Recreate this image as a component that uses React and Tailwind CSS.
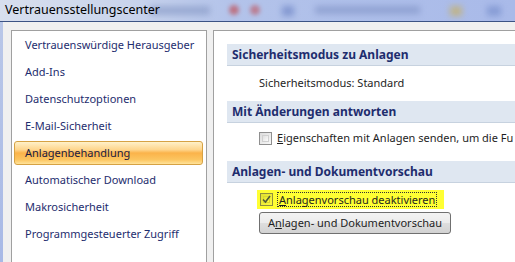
import React from "react";

const font = { fontFamily: '"Noto Sans", "Open Sans", sans-serif' };

function Item({ label, selected }) {
  return (
    <div className="h-[27px] px-[2px] pt-[1px]">
      <div
        className={
          "h-[24px] flex items-center pl-[10px] rounded-[3px] text-[11px] whitespace-nowrap " +
          (selected
            ? "border border-[#d6a244] bg-[linear-gradient(to_bottom,#fff1c9_0%,#fed58c_35%,#fbb34a_50%,#fcc560_80%,#ffe39a_100%)] text-[#1a1a40]"
            : "border border-transparent text-[#1e2d6e]")
        }
      >
        {label}
      </div>
    </div>
  );
}

function Header({ children }) {
  return (
    <div className="ml-[13px] h-[22px] bg-[#dfe7f1] border-b border-[#c7d2df] flex items-center pl-[5px] text-[12px] font-bold text-[#1e2d6e] whitespace-nowrap">
      {children}
    </div>
  );
}

function Checkbox({ checked }) {
  return (
    <div
      className={
        "w-[13px] h-[13px] border p-[2px] shrink-0 " +
        (checked
          ? "border-[#8f8f40] bg-[linear-gradient(135deg,#e0e030,#fbfb40)]"
          : "border-[#8f8f8f] bg-[linear-gradient(135deg,#dcdcdc,#f8f8f8)]")
      }
    >
      <div
        className={
          "w-full h-full border flex items-center justify-center " +
          (checked
            ? "border-[#d8d830] bg-[linear-gradient(135deg,#e4e430,#ffff40)]"
            : "border-[#d0d0d0] bg-[linear-gradient(135deg,#e0e0e0,#fbfbfb)]")
        }
      >
        {checked && (
          <svg width="9" height="9" viewBox="0 0 9 9" className="overflow-visible">
            <path d="M1 4.5 L3.5 7 L8 1" fill="none" stroke="#4f5a3a" strokeWidth="1.6" />
          </svg>
        )}
      </div>
    </div>
  );
}

export default function App() {
  const items = [
    "Vertrauenswürdige Herausgeber",
    "Add-Ins",
    "Datenschutzoptionen",
    "E-Mail-Sicherheit",
    "Anlagenbehandlung",
    "Automatischer Download",
    "Makrosicherheit",
    "Programmgesteuerter Zugriff",
  ];
  return (
    <div className="w-[515px] h-[262px] overflow-hidden bg-[#f0f0f0] flex flex-col" style={font}>
      {/* title bar */}
      <div className="relative h-[21px] shrink-0 overflow-hidden bg-[linear-gradient(to_right,#d8dfee_0%,#c9d4ec_25%,#b3c3ea_45%,#a9bae9_100%)]">
        <div className="absolute left-[150px] top-[6px] w-[60px] h-[9px] bg-[#8a9cc8] blur-[3px] opacity-70" />
        <div className="absolute left-[229px] top-[5px] w-[10px] h-[10px] rounded-full bg-[#c0525a] blur-[2px] opacity-70" />
        <div className="absolute left-[250px] top-[5px] w-[10px] h-[10px] rounded-full bg-[#c0525a] blur-[2px] opacity-60" />
        <div className="absolute left-[282px] top-[6px] w-[12px] h-[10px] bg-[#6f86c6] blur-[3px] opacity-70" />
        <div className="absolute left-[315px] top-[6px] w-[105px] h-[8px] bg-[#7d90c4] blur-[3px] opacity-60" />
        <div className="absolute left-[450px] top-[6px] w-[12px] h-[10px] bg-[#c8b060] blur-[3px] opacity-70" />
        <div className="absolute left-[487px] top-[6px] w-[14px] h-[10px] bg-[#7088c8] blur-[3px] opacity-60" />
        <div className="absolute left-[5px] top-0 h-[21px] flex items-center text-[12.5px] text-black whitespace-nowrap">
          Vertrauensstellungscenter
        </div>
      </div>
      <div className="h-px shrink-0 bg-[#3c5384]" />
      <div className="flex flex-1 min-h-0">
        <div className="w-[3px] shrink-0 bg-[linear-gradient(to_bottom,#b9c7e8,#a8b9e6)]" />
        <div className="flex flex-1 min-w-0 pt-[8px] pl-[8px] gap-[6px]">
          {/* left nav */}
          <div className="w-[196px] shrink-0 h-[300px] bg-white border border-[#a0a0a0] pt-[1px] pr-[1px]">
            {items.map((it) => (
              <Item key={it} label={it} selected={it === "Anlagenbehandlung"} />
            ))}
          </div>
          {/* right content */}
          <div className="w-[400px] shrink-0 h-[300px] overflow-hidden bg-white border border-[#a0a0a0] pt-[13px] text-[11px]">
            <Header>Sicherheitsmodus zu Anlagen</Header>
            <div className="h-[35px] flex items-center pl-[45px] text-[#1e1e1e] whitespace-nowrap">
              Sicherheitsmodus: Standard
            </div>
            <Header>Mit Änderungen antworten</Header>
            <div className="h-[38px] pb-[8px] flex items-center pl-[45px] gap-[5px] text-[#1e1e1e] whitespace-nowrap">
              <Checkbox />
              <span>
                <span className="underline">E</span>igenschaften mit Anlagen senden, um die Fu
              </span>
            </div>
            <Header>Anlagen- und Dokumentvorschau</Header>
            <div className="pl-[43px] pt-[7px]">
              <div className="w-[187px] h-[19px] bg-[#ffff33] flex items-center pl-[3px] gap-[4px] whitespace-nowrap text-[#1e1e1e]">
                <Checkbox checked />
                <span className="border border-dotted border-[#333] h-[15px] leading-[13px] px-px">
                  <span className="underline">A</span>nlagenvorschau deaktivieren
                </span>
              </div>
              <div className="mt-[3px] ml-[2px] w-[192px] h-[22px] rounded-[3px] border border-[#707070] bg-[linear-gradient(to_bottom,#f3f3f3_0%,#ececec_48%,#dedede_52%,#d2d2d2_100%)] flex items-center justify-center text-[#1e1e1e] whitespace-nowrap">
                <span>
                  A<span className="underline">n</span>lagen- und Dokumentvorschau
                </span>
              </div>
            </div>
          </div>
        </div>
      </div>
    </div>
  );
}
